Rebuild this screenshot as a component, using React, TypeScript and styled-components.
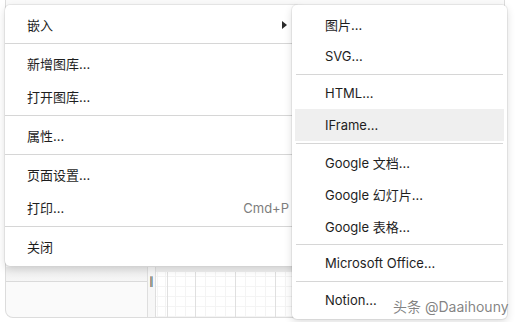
import React from 'react';
import styled, { createGlobalStyle } from 'styled-components';

const GlobalStyle = createGlobalStyle`
  html, body {
    margin: 0;
    padding: 0;
    background: #ffffff;
  }
  body {
    font-family: Inter, "Noto Sans CJK SC", "Liberation Sans", sans-serif;
  }
`;

const Stage = styled.div`
  position: relative;
  width: 515px;
  height: 322px;
  padding: 0 10px 4px 5px;
  box-sizing: border-box;
  overflow: hidden;
  background: #ffffff;
`;

const AppWindow = styled.div`
  height: 318px;
  box-sizing: border-box;
  border: 1px solid #dcdcdc;
  border-top: none;
  border-radius: 0 0 8px 8px;
  display: flex;
  flex-direction: column;
  justify-content: flex-end;
  overflow: hidden;
  background: #fafafa;
`;

const SheetRow = styled.div`
  height: 50px;
  display: grid;
  grid-template-columns: 141px 9px 1fr;
`;

const SidePane = styled.div`
  display: flex;
  flex-direction: column;
`;

const SideHeader = styled.div`
  height: 14px;
  background: linear-gradient(#ececec, #f6f6f6);
  border-bottom: 1px solid #dadada;
`;

const Splitter = styled.div`
  border-left: 1px solid #dedede;
  border-right: 1px solid #dedede;
  display: flex;
  justify-content: center;
  padding-top: 9px;
  font-size: 9px;
  color: #444;
  background: #f7f7f7;
`;

const Grid = styled.div`
  background-color: #ffffff;
  background-image:
    linear-gradient(#efefef, #efefef),
    repeating-linear-gradient(90deg, #e0e0e0 0 1px, transparent 1px 40px),
    repeating-linear-gradient(90deg, #f4f4f4 0 1px, transparent 1px 10px),
    repeating-linear-gradient(0deg, #f4f4f4 0 1px, transparent 1px 10px);
  background-size: 100% 5px, auto, auto, auto;
  background-repeat: no-repeat, repeat, repeat, repeat;
  background-position: 0 0, 39px 0, 9px 0, 0 0;
`;

const Menu = styled.div<{ $left: number; $width: number; $z: number }>`
  position: absolute;
  top: 5px;
  left: ${(p) => p.$left}px;
  width: ${(p) => p.$width}px;
  z-index: ${(p) => p.$z};
  box-sizing: border-box;
  padding: 3px 0;
  background: #ffffff;
  border-radius: 5px;
  box-shadow: 0 0 0 1px rgba(0, 0, 0, 0.06), 0 3px 8px rgba(0, 0, 0, 0.14);
`;

const Item = styled.div<{ $pad: number; $h: number; $active?: boolean }>`
  height: ${(p) => p.$h}px;
  margin: 0 ${(p) => (p.$active ? 3 : 0)}px;
  padding: 0 11px 0 ${(p) => p.$pad - (p.$active ? 3 : 0)}px;
  display: flex;
  align-items: center;
  justify-content: space-between;
  font-size: 13px;
  color: #1e1e1e;
  background: ${(p) => (p.$active ? '#efefef' : 'transparent')};
  white-space: nowrap;
`;

const Shortcut = styled.span`
  color: #7d7d7d;
`;

const Arrow = styled.span`
  width: 0;
  height: 0;
  margin-right: 2px;
  border-top: 4px solid transparent;
  border-bottom: 4px solid transparent;
  border-left: 5px solid #2a2a2a;
`;

const Separator = styled.div<{ $inset: number; $below: number }>`
  height: 1px;
  margin: 2px ${(p) => p.$inset}px ${(p) => p.$below}px;
  background: #d6d6d6;
`;

const Watermark = styled.div`
  position: absolute;
  left: 393px;
  top: 296px;
  z-index: 5;
  font-size: 14px;
  color: rgba(90, 90, 90, 0.75);
  text-shadow: 0 0 2px #ffffff;
  white-space: nowrap;
`;

type Entry = { label?: string; shortcut?: string; submenu?: boolean; active?: boolean; sep?: boolean };

const mainEntries: Entry[] = [
  { label: '嵌入', submenu: true },
  { sep: true },
  { label: '新增图库...' },
  { label: '打开图库...' },
  { sep: true },
  { label: '属性...' },
  { sep: true },
  { label: '页面设置...' },
  { label: '打印...', shortcut: 'Cmd+P' },
  { sep: true },
  { label: '关闭' }
];

const subEntries: Entry[] = [
  { label: '图片...' },
  { label: 'SVG...' },
  { sep: true },
  { label: 'HTML...' },
  { label: 'IFrame...', active: true },
  { sep: true },
  { label: 'Google 文档...' },
  { label: 'Google 幻灯片...' },
  { label: 'Google 表格...' },
  { sep: true },
  { label: 'Microsoft Office...' },
  { sep: true },
  { label: 'Notion...' }
];

const renderEntries = (entries: Entry[], pad: number, h: number, inset: number, below: number) =>
  entries.map((e, i) =>
    e.sep ? (
      <Separator key={i} $inset={inset} $below={below} />
    ) : (
      <Item key={i} $pad={pad} $h={h} $active={e.active}>
        <span>{e.label}</span>
        {e.shortcut && <Shortcut>{e.shortcut}</Shortcut>}
        {e.submenu && <Arrow />}
      </Item>
    )
  );

const App: React.FC = () => (
  <>
    <GlobalStyle />
    <Stage>
      <AppWindow>
        <SheetRow>
          <SidePane>
            <SideHeader />
          </SidePane>
          <Splitter>‖</Splitter>
          <Grid />
        </SheetRow>
      </AppWindow>
      <Menu $left={5} $width={295} $z={1}>
        {renderEntries(mainEntries, 22, 33, 0, 3)}
      </Menu>
      <Menu $left={292} $width={215} $z={2}>
        {renderEntries(subEntries, 33, 32, 4, 2)}
      </Menu>
      <Watermark>头条 @Daaihouny</Watermark>
    </Stage>
  </>
);

export default App;
